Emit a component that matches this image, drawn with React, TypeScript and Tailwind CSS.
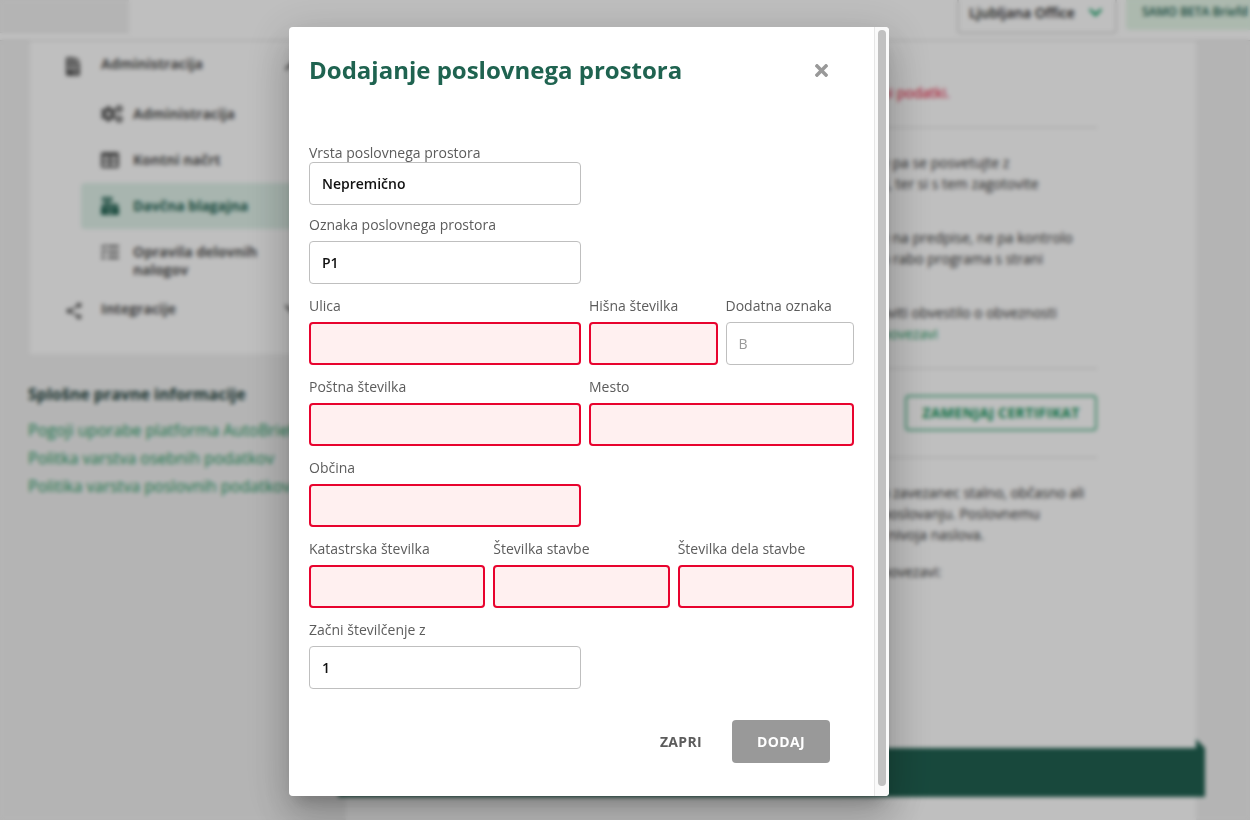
import React, { useState } from 'react';
import { FaTimes, FaFileInvoice, FaCogs, FaTable, FaCashRegister, FaTasks, FaChevronUp, FaChevronDown } from 'react-icons/fa';
import { MdShare } from 'react-icons/md';

interface FieldProps {
  id: string;
  label: string;
  initial?: string;
  placeholder?: string;
  required?: boolean;
  half?: boolean;
  tight?: boolean;
}

const Field: React.FC<FieldProps> = ({ id, label, initial = '', placeholder, required, half, tight }) => {
  const [value, setValue] = useState(initial);
  const invalid = required && value.trim() === '';

  return (
    <div className={`flex flex-col min-w-0 ${tight ? '' : 'gap-[7px]'} ${half ? 'w-[272px]' : 'flex-1'}`}>
      <label htmlFor={id} className="text-sm leading-[18px] text-[#5c5c5c] whitespace-nowrap">{label}</label>
      <input
        id={id}
        type="text"
        value={value}
        placeholder={placeholder}
        aria-invalid={invalid}
        onChange={(e) => setValue(e.target.value)}
        className={`w-full h-[43px] px-3 rounded text-sm font-semibold text-[#111111] placeholder:font-normal placeholder:text-[#999999] outline-none ${invalid ? 'border-2 border-[#e8032e] bg-[#fff0f0]' : 'border border-[#bfbfbf] bg-white'}`}
      />
    </div>
  );
};

const subItems = [
  { label: 'Administracija', icon: FaCogs, iconClass: 'w-[22px] h-[18px] mr-2.5', active: false },
  { label: 'Kontni načrt', icon: FaTable, iconClass: 'w-[18px] h-[18px] mr-3.5', active: false },
  { label: 'Davčna blagajna', icon: FaCashRegister, iconClass: 'w-[18px] h-[18px] mr-3.5', active: true },
];

const legalLinks = [
  'Pogoji uporabe platforma AutoBrief',
  'Politka varstva osebnih podatkov',
  'Politika varstva poslovnih podatkov',
];

const TopBar = () => (
  <header className="h-[41px] bg-white border-b border-[#d8d8d8] flex items-end overflow-hidden">
    <div className="w-[129px] h-10 mb-[7px] shrink-0 bg-[#f1f1f1] border-b border-[#e4e4e4]" />
    <div className="flex-1" />
    <div className="relative mb-1.5 mr-[9px] shrink-0">
      <select aria-label="Poslovalnica" className="appearance-none w-40 h-[43px] pl-2.5 rounded border-2 border-[#e0e0e0] bg-white text-sm font-semibold text-[#222222]">
        <option>Ljubljana Office</option>
      </select>
      <FaChevronDown size={15} className="absolute right-3.5 top-3.5 text-[#0f9d63] pointer-events-none" />
    </div>
    <div className="w-[124px] h-9 mb-2.5 pl-4 shrink-0 rounded-l bg-[#e6f7e9] flex items-center text-xs font-semibold text-[#206151] whitespace-nowrap overflow-hidden">
      SAMO BETA Briefd
    </div>
  </header>
);

const Sidebar = () => (
  <aside className="w-[298px] shrink-0">
    <nav className="ml-0.5 bg-white text-sm leading-[18px] font-bold text-[#555555]">
      <a href="#administracija" className="h-[46px] mb-1 flex items-center pl-9 pr-[26px]">
        <FaFileInvoice className="w-[14px] h-[19px] mt-1 mr-[21px]" />
        <span className="flex-1">Administracija</span>
        <FaChevronUp size={16} className="mt-1" />
      </a>
      {subItems.map(({ label, icon: Icon, iconClass, active }) => (
        <a
          key={label}
          href="#podmeni"
          className={`h-[46px] ml-[51px] mr-2.5 pl-5 flex items-center rounded ${active ? 'bg-[#e0f2ea] text-[#206151]' : ''}`}
        >
          <Icon className={iconClass} />
          {label}
        </a>
      ))}
      <a href="#nalogi" className="h-[63px] ml-[51px] mr-2.5 pl-5 pt-3.5 flex items-start">
        <FaTasks size={18} className="mr-3.5 shrink-0" />
        <span className="w-36">Opravila delovnih nalogov</span>
      </a>
      <a href="#integracije" className="h-[62px] pb-[29px] flex items-center pl-[34px] pr-[26px]">
        <MdShare size={20} className="mt-1 mr-[17px]" />
        <span className="flex-1">Integracije</span>
        <FaChevronDown size={16} />
      </a>
    </nav>
    <h2 className="mt-7 mb-2.5 text-base leading-6 font-bold text-[#1c3f3a]">Splošne pravne informacije</h2>
    <div className="flex flex-col text-base leading-7 text-[#1d9a62]">
      {legalLinks.map((link) => (
        <a key={link} href="#pravno" className="whitespace-nowrap">{link}</a>
      ))}
    </div>
  </aside>
);

const MainContent = () => (
  <main className="flex-1 min-w-0 bg-white text-sm leading-[21px] text-[#333333] whitespace-nowrap">
    <div className="h-[707px] pl-[535px] pr-[99px] pt-[41px]">
      <p className="text-[#e4002b]">ni podatki.</p>
      <hr className="mt-6 border-[#d8d8d8]" />
      <p className="mt-6">e pa se posvetujte z<br />k, ter si s tem zagotovite</p>
      <p className="mt-[33px]">e na predpise, ne pa kontrolo<br />o rabo programa s strani</p>
      <p className="mt-[33px]">aviti obvestilo o obveznosti<br /><a href="#povezava" className="text-[#1d9a62]">povezavi</a></p>
      <hr className="mt-6 border-[#d8d8d8]" />
      <div className="flex justify-end mt-[26px]">
        <button type="button" className="w-48 h-9 shrink-0 rounded border-2 border-[#5cb891] text-sm font-bold tracking-wide text-[#0f9459]">
          ZAMENJAJ CERTIFIKAT
        </button>
      </div>
      <hr className="mt-[26px] border-[#d8d8d8]" />
      <p className="mt-6">o zavezanec stalno, občasno ali<br />poslovanju. Poslovnemu<br />i nivoja naslova.</p>
      <p className="mt-4">povezavi:</p>
    </div>
    <div className="relative -ml-2 -mr-[9px] h-[49px] bg-[#206151]">
      <svg viewBox="0 0 9 9" className="absolute right-0 -top-[9px] w-[9px] h-[9px]">
        <path d="M0 0 L9 9 L0 9 Z" fill="#206151" />
      </svg>
    </div>
  </main>
);

const PremiseDialog = ({ onClose }: { onClose: () => void }) => (
  <div
    role="dialog"
    aria-labelledby="dialog-title"
    className="w-[600px] h-full min-h-[769px] flex rounded overflow-hidden bg-white"
  >
    <form className="flex-1 min-w-0 px-5 pt-[27px]" onSubmit={(e) => e.preventDefault()}>
      <div className="flex items-center justify-between pr-[23px]">
        <h1 id="dialog-title" className="text-2xl leading-8 font-bold text-[#1f6350]">Dodajanje poslovnega prostora</h1>
        <button type="button" aria-label="Zapri okno" onClick={onClose} className="text-[#999999]">
          <FaTimes size={19} />
        </button>
      </div>

      <div className="mt-[58px] mb-[11px] flex">
        <Field id="vrsta" label="Vrsta poslovnega prostora" initial="Nepremično" half tight />
      </div>

      <div className="flex flex-col gap-[13px]">
        <div className="flex gap-2">
          <Field id="oznaka" label="Oznaka poslovnega prostora" initial="P1" half />
        </div>
        <div className="flex gap-2">
          <Field id="ulica" label="Ulica" required half />
          <Field id="hisna" label="Hišna številka" required />
          <Field id="dodatna" label="Dodatna oznaka" placeholder="B" />
        </div>
        <div className="flex gap-2">
          <Field id="posta" label="Poštna številka" required half />
          <Field id="mesto" label="Mesto" required />
        </div>
        <div className="flex gap-2">
          <Field id="obcina" label="Občina" required half />
        </div>
        <div className="flex gap-2">
          <Field id="katastrska" label="Katastrska številka" required />
          <Field id="stavba" label="Številka stavbe" required />
          <Field id="del" label="Številka dela stavbe" required />
        </div>
        <div className="flex gap-2">
          <Field id="zacetek" label="Začni številčenje z" initial="1" half />
        </div>
      </div>

      <div className="mt-[31px] mr-6 flex justify-end gap-[5px] text-sm font-bold tracking-wide">
        <button type="button" onClick={onClose} className="h-[43px] px-[25px] text-[#5c5c5c]">ZAPRI</button>
        <button type="submit" className="h-[43px] px-[25px] rounded bg-[#999999] text-white">DODAJ</button>
      </div>
    </form>

    {/* Scroll track */}
    <div className="w-[15px] shrink-0 pt-[3px] pb-2.5 flex justify-center bg-[#fafafa] border-l border-[#e6e6e6]">
      <div className="w-2 rounded-full bg-[#c1c1c1]" />
    </div>
  </div>
);

const App = () => {
  const [open, setOpen] = useState(true);

  return (
    <div className="h-screen overflow-hidden bg-[#f1f1f1] font-['Open_Sans',sans-serif]">
      <div className="min-h-full flex flex-col">
        <TopBar />
        <div className="h-[calc(100vh-41px)] pl-7 pr-[54px] flex gap-5">
          <Sidebar />
          <MainContent />
        </div>
      </div>

      {open && (
        <div className="fixed inset-0 bg-black/25 backdrop-blur-[2px] flex justify-center pt-[27px] pb-6 pr-[72px]">
          <div className="rounded shadow-[0_11px_15px_-7px_rgba(0,0,0,0.2),0_24px_38px_3px_rgba(0,0,0,0.14),0_9px_46px_8px_rgba(0,0,0,0.12)]">
            <PremiseDialog onClose={() => setOpen(false)} />
          </div>
        </div>
      )}
    </div>
  );
};

export default App;
